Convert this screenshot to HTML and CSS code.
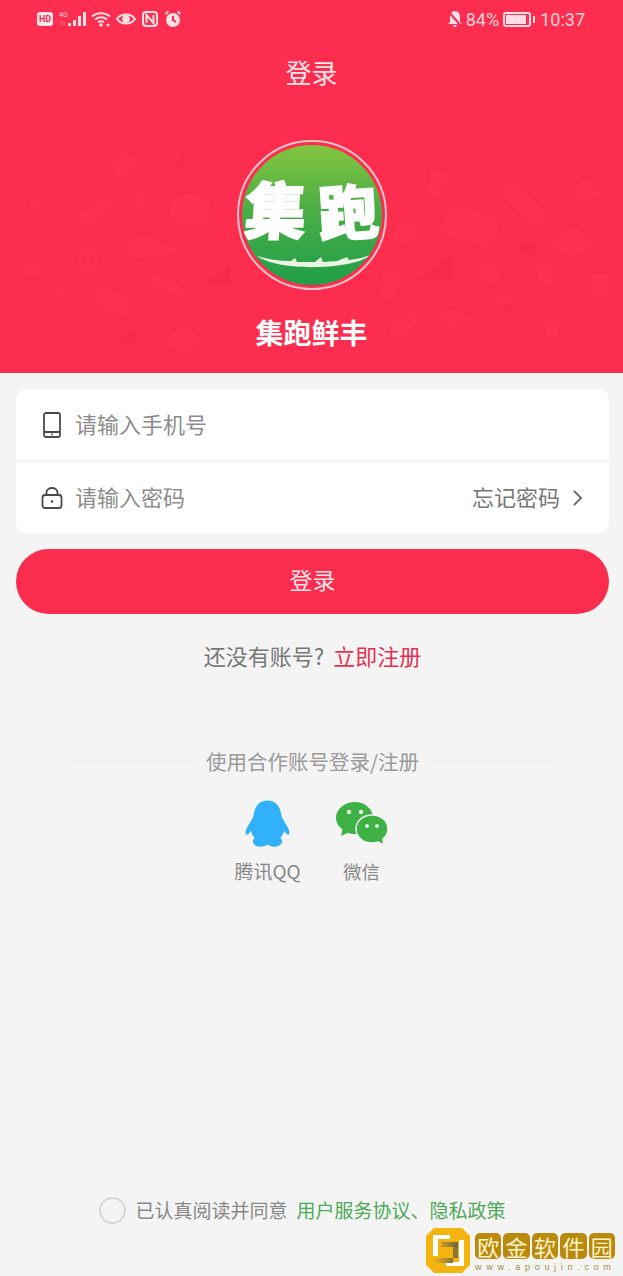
FILE: index.html
```html
<!DOCTYPE html>
<html lang="zh-CN">
<head>
<meta charset="utf-8">
<title>集跑鲜丰</title>
<link rel="stylesheet" href="styles.css">
</head>
<body>
<div class="page">
  <header class="hero">
    <svg class="doodles" viewBox="0 0 623 373" aria-hidden="true">
      <defs>
        <g id="leg"><path d="M-22 -2C-22 -14 -6 -16 6 -9C12 -5 15 -2 19 -1L27 -3L28 4L21 5C13 12 -22 16 -22 -2Z"/></g>
        <g id="small"><circle cx="0" cy="-8" r="7"/><path d="M-2 -2L-4 14M2 -2L0 14"/></g>
        <g id="burger"><rect x="-24" y="-14" width="48" height="28" rx="7"/><path d="M-24 -5H24M-24 3H24"/></g>
        <g id="hotdog"><rect x="-24" y="-9" width="48" height="18" rx="9"/><path d="M-20 0H20"/></g>
        <g id="tri"><path d="M-13 8L11 -8L11 8Z" class="fillme"/></g>
        <g id="cup"><path d="M-11 -12H11L7 13H-7ZM-13 -12H13"/></g>
        <g id="cake"><path d="M-18 -2L2 -14L18 4L0 16L-18 8Z"/><path d="M-12 -12L-8 -6M-4 -17L-2 -9M4 -16L4 -9"/></g>
        <g id="cone"><circle cx="-16" cy="-3" r="9"/><circle cx="-5" cy="0" r="8"/><path d="M0 -7L24 10L-3 9"/></g>
        <g id="cat"><path d="M-20 -12L-11 -18C-4 -21 6 -21 12 -17L20 -14C23 -4 20 14 0 15C-16 15 -24 2 -20 -12Z"/></g>
        <g id="pizza"><path d="M-24 -12L22 6L-8 22Z"/><path d="M-16 -6L-6 14M-4 -4L3 10"/></g>
        <g id="donut"><circle r="12"/><circle r="5" class="fillme"/></g>
      </defs>
      <g class="doodle-set">
        <use href="#small" transform="translate(33 212) rotate(15)"/>
        <use href="#hotdog" transform="translate(93 213) rotate(-35) scale(.85)"/>
        <use href="#hotdog" transform="translate(140 200) rotate(-50) scale(.6)"/>
        <use href="#cat" transform="translate(190 213)"/>
        <use href="#leg" transform="translate(150 248) scale(1.1)"/>
        <use href="#cake" transform="translate(34 268) scale(.7)"/>
        <use href="#donut" transform="translate(88 260)"/>
        <use href="#small" transform="translate(63 300) rotate(-5)"/>
        <use href="#burger" transform="translate(113 302) rotate(25) scale(.8)"/>
        <use href="#cone" transform="translate(175 287) rotate(8)"/>
        <use href="#tri" transform="translate(218 276)"/>
        <use href="#cake" transform="translate(185 338) scale(1.05)"/>
        <use href="#tri" transform="translate(128 337) scale(.7)"/>
        <use href="#donut" transform="translate(75 178) scale(.7)"/>
        <use href="#small" transform="translate(180 160) rotate(-35)"/>
        <use href="#cup" transform="translate(125 165) rotate(30)"/>
        <use href="#cup" transform="translate(437 183) rotate(20) scale(1.1)"/>
        <use href="#hotdog" transform="translate(523 203) rotate(42) scale(1.2)"/>
        <use href="#cake" transform="translate(585 190) scale(.9)"/>
        <use href="#cat" transform="translate(405 235) scale(.65)"/>
        <use href="#burger" transform="translate(470 226) rotate(17) scale(1.2)"/>
        <use href="#tri" transform="translate(528 245) rotate(40) scale(.8)"/>
        <use href="#cake" transform="translate(573 240) scale(1.15)"/>
        <use href="#tri" transform="translate(437 268) scale(1.3)"/>
        <use href="#cup" transform="translate(490 272) rotate(-35)"/>
        <use href="#cup" transform="translate(545 275) scale(.9)"/>
        <use href="#cup" transform="translate(600 285) scale(1)"/>
        <use href="#cup" transform="translate(390 285) rotate(15) scale(1.2)"/>
        <use href="#pizza" transform="translate(455 312)"/>
        <use href="#small" transform="translate(508 306) rotate(-20)"/>
        <use href="#hotdog" transform="translate(405 325) rotate(-40) scale(.8)"/>
        <use href="#cup" transform="translate(552 325) scale(.9)"/>
      </g>
    </svg>

    <div class="status">
      <div class="status-left">
        <span class="hd">HD</span>
        <span class="net"><i>4G</i><i>4G</i></span>
        <svg class="i-signal" viewBox="0 0 18 14"><path d="M0 11h3v3H0zM5 8h3v6H5zM10 4h3v10h-3zM15 0h3v14h-3z"/></svg>
        <svg class="i-wifi" viewBox="0 0 20 16"><path class="st" d="M1 5.500C6 1 14 1 19 5.500M4 8.500C7.500 5.500 12.500 5.500 16 8.500M7 11.300C8.800 10 11.200 10 13 11.300"/><circle cx="10" cy="14" r="1.700"/><circle cx="17" cy="14" r="1.500"/></svg>
        <svg class="i-eye" viewBox="0 0 20 14"><path class="st" d="M1 7C5 1 15 1 19 7C15 13 5 13 1 7Z"/><circle class="pupil" cx="10" cy="7" r="3.800"/></svg>
        <svg class="i-nfc" viewBox="0 0 16 16"><rect class="st" x="1" y="1" width="14" height="14" rx="3"/><path class="st" d="M4.500 12V4L11.500 12V4"/></svg>
        <svg class="i-alarm" viewBox="0 0 18 18"><circle cx="9" cy="10" r="7"/><path class="cut" d="M9 6V10L12 12"/><path class="st" d="M1.500 4L4.500 1.500M16.500 4L13.500 1.500"/></svg>
      </div>
      <div class="status-right">
        <svg class="i-bell" viewBox="0 0 16 18"><path d="M8 1C11.500 1 13 4 13 7V12L15 14H1L3 12V7C3 4 4.500 1 8 1ZM6 15H10C10 17.500 6 17.500 6 15Z"/><path class="cut" d="M1.500 1.500L14.500 16.500"/></svg>
        <span>84%</span>
        <span class="battery"><b></b></span>
        <span class="clock">10:37</span>
      </div>
    </div>

    <h1 class="title">登录</h1>

    <div class="logo">
      <div class="logo-disc">
        <span class="logo-a">集</span><span class="logo-b">跑</span>
        <svg class="crescent" viewBox="0 0 114 13"><path d="M0 1C10 4 22 6 34 6L38 3L40 7L58 7L64 2L66 7L80 6L90 2L92 5L104 3L114 0C96 15 22 17 0 1Z"/></svg>
      </div>
    </div>
    <div class="brand">集跑鲜丰</div>
  </header>

  <main class="main">
    <form class="card">
      <div class="row">
        <svg class="row-icon" viewBox="0 0 22 26"><rect x="3" y="1" width="16" height="24" rx="2"/><path d="M3 20H19"/><circle class="dot" cx="11" cy="22.500" r=".9"/></svg>
        <span class="ph">请输入手机号</span>
      </div>
      <div class="row">
        <svg class="row-icon" viewBox="0 0 22 26"><rect x="1.500" y="10" width="19" height="13" rx="2.500"/><path d="M5.500 10V7.500C5.500 1.500 16.500 1.500 16.500 7.500V10"/><circle class="dot" cx="11" cy="16.500" r="1.300"/></svg>
        <span class="ph">请输入密码</span>
        <span class="forgot">忘记密码</span>
        <svg class="chev" viewBox="0 0 12 20"><path d="M2 2L10 10L2 18"/></svg>
      </div>
    </form>

    <div class="btn">登录</div>

    <p class="signup">还没有账号?<span class="signup-link">立即注册</span></p>

    <div class="partner">
      <span class="partner-line"></span>
      <span>使用合作账号登录/注册</span>
      <span class="partner-line"></span>
    </div>

    <div class="social">
      <div class="social-item">
        <svg class="qq" viewBox="0 0 46 48"><path d="M23 0C31 0 36 6 37 14C38 19 40 21 43 26C46 31 46 35 44 35C43 35 41 33 40 31C39 34 38 37 36 38C39 40 39 46 32 47C28 48 25 46 23 45C21 46 18 48 14 47C7 46 7 40 10 38C8 37 7 34 6 31C5 33 3 35 2 35C0 35 0 31 3 26C6 21 8 19 9 14C10 6 15 0 23 0Z"/></svg>
        <span>腾讯QQ</span>
      </div>
      <div class="social-item">
        <svg class="wx" viewBox="0 0 52 44">
          <path class="wx-b" d="M19 0C29 0 37 7 37 16C37 25 29 32 19 32C16.500 32 14 31.500 12 30.700L5 34L6.500 27.500C2.500 24.500 0 20.500 0 16C0 7 8.500 0 19 0Z"/>
          <path class="wx-s" d="M36 13C45 13 52 19 52 27C52 31.500 50 34.500 47 37L48 43L42 40C40 40.700 38 41 36 41C27 41 20 35 20 27C20 19 27 13 36 13Z"/>
          <circle class="wx-e" cx="13" cy="10" r="2.200"/><circle class="wx-e" cx="25" cy="10" r="2.200"/>
          <circle class="wx-e" cx="31" cy="24" r="1.900"/><circle class="wx-e" cx="41" cy="24" r="1.900"/>
        </svg>
        <span>微信</span>
      </div>
    </div>

    <div class="agree">
      <span class="radio"></span>
      <span>已认真阅读并同意</span>
      <span class="agree-link">用户服务协议、隐私政策</span>
    </div>
  </main>

  <aside class="mark">
    <svg class="mark-logo" viewBox="0 0 44 45">
      <defs>
        <linearGradient id="mg" x1="0" y1="0" x2="1" y2="0"><stop offset="0" stop-color="#f0b31a"/><stop offset="1" stop-color="#6f6240"/></linearGradient>
      </defs>
      <path class="mark-o" d="M8 0H36L44 8V37L36 45H8L0 37V8Z"/>
      <path class="mark-w" d="M7 7H24V11H12V28H7ZM20 34H33V12H38V38H20Z"/>
      <path fill="url(#mg)" d="M15 14H32V19H15ZM8 30H27V35H8Z"/>
      <path fill="#8a7436" d="M27 19H32V30H27Z"/>
      <path class="mark-o" d="M14 19H20V28H14Z"/>
    </svg>
    <div class="mark-text">
      <div class="mark-cn"><span>欧</span><span>金</span><span>软</span><span>件</span><span>园</span></div>
      <div class="mark-en">www.apoujin.com</div>
    </div>
  </aside>
</div>
</body>
</html>
```

FILE: styles.css
```css
* { box-sizing: border-box; }
html, body { margin: 0; padding: 0; }
body {
  background: #f4f4f4;
  font-family: "Noto Sans CJK SC", "Noto Sans", sans-serif;
  color: #888;
}
.page {
  position: relative;
  width: 623px;
  height: 1276px;
  overflow: hidden;
  display: flex;
  flex-direction: column;
}

/* header */
.hero {
  position: relative;
  height: 373px;
  flex: none;
  background: #fd2d4f;
  display: flex;
  flex-direction: column;
  align-items: center;
}
.doodles {
  position: absolute;
  inset: 0;
  width: 100%;
  height: 100%;
  filter: blur(.6px);
}
.doodle-set use { fill: rgba(255, 120, 140, .05); stroke: rgba(205, 25, 60, .09); stroke-width: 1.500; }
.fillme { fill: rgba(205, 25, 60, .08); }

.status {
  position: relative;
  width: 100%;
  height: 38px;
  padding: 0 38px 0 37px;
  display: flex;
  justify-content: space-between;
  align-items: center;
  color: rgba(255, 255, 255, .8);
  font-family: Roboto, "Liberation Sans", sans-serif;
  font-size: 18px;
}
.status svg { fill: rgba(255, 255, 255, .85); flex: none; }
.status .st { fill: none; stroke: rgba(255, 255, 255, .85); stroke-width: 2; }
.status .cut { fill: none; stroke: #fd2d4f; stroke-width: 2; }
.status .pupil { fill: rgba(255, 255, 255, .85); }
.status-left, .status-right { display: flex; align-items: center; }
.status-left { gap: 5px; }
.hd {
  width: 16px;
  height: 14px;
  border-radius: 3px;
  background: rgba(255, 255, 255, .88);
  color: #fd2d4f;
  font-size: 9px;
  font-weight: 700;
  line-height: 14px;
  text-align: center;
}
.net {
  display: flex;
  flex-direction: column;
  width: 11px;
  margin-left: 1px;
  margin-right: -7px;
  font-size: 7px;
  line-height: 8px;
}
.net i { font-style: normal; }
.net i + i { opacity: .4; font-size: 5px; }
.i-signal { width: 18px; height: 14px; }
.i-wifi { width: 20px; height: 16px; }
.i-eye { width: 20px; height: 14px; }
.i-nfc { width: 16px; height: 16px; margin-left: 1px; }
.i-alarm { width: 18px; height: 18px; margin-left: 1px; }
.i-bell { width: 16px; height: 18px; margin-right: 3px; }
.battery {
  position: relative;
  width: 28px;
  height: 15px;
  margin: 0 10px 0 4px;
  padding: 1px;
  border: 2px solid rgba(255, 255, 255, .85);
  border-radius: 3px;
}
.battery b { display: block; height: 100%; width: 92%; background: rgba(255, 255, 255, .85); }
.battery::after {
  content: "";
  position: absolute;
  right: -6px;
  top: 2px;
  width: 2px;
  height: 7px;
  background: rgba(255, 255, 255, .85);
}
.clock { margin-left: -1px; }

.title {
  position: relative;
  margin: 14px 0 0;
  font-size: 26px;
  font-weight: 400;
  line-height: 40px;
  color: rgba(255, 255, 255, .9);
}
.logo {
  position: relative;
  margin-top: 48px;
  width: 150px;
  height: 150px;
  padding: 3px;
  border: 2px solid #f9c3cd;
  border-radius: 50%;
}
.logo-disc {
  position: relative;
  height: 100%;
  border-radius: 50%;
  background: linear-gradient(#84c53f 0%, #4cae45 45%, #1f9e48 100%);
  color: #fff;
  font-weight: 900;
  overflow: hidden;
}
.logo-a, .logo-b {
  position: absolute;
  line-height: 1;
  -webkit-text-stroke: 1.500px #fff;
}
.logo-a { left: 3px; top: 31px; font-size: 62px; transform: skewX(-4deg); }
.logo-b { left: 76px; top: 34px; font-size: 60px; transform: rotate(-4deg); }
.crescent {
  position: absolute;
  left: 15px;
  bottom: 17px;
  width: 114px;
  height: 13px;
  fill: #e9f4e2;
}
.brand {
  position: relative;
  margin-top: 22px;
  font-size: 28px;
  font-weight: 700;
  line-height: 40px;
  color: #fff;
  letter-spacing: 0;
}

/* main */
.main {
  flex: 1;
  padding: 16px 14px 0 16px;
  display: flex;
  flex-direction: column;
  align-items: center;
}
.card {
  width: 593px;
  height: 144px;
  background: #fff;
  border-radius: 11px;
  overflow: hidden;
}
.row {
  height: 71px;
  padding: 0 26px 0 25px;
  display: flex;
  align-items: center;
  font-size: 22px;
  color: #888;
}
.row + .row { height: 73px; border-top: 2px solid #f3f3f3; }
.row-icon {
  width: 22px;
  height: 26px;
  margin-right: 12px;
  fill: none;
  stroke: #4b4b4b;
  stroke-width: 1.800;
}
.row-icon .dot { fill: #4b4b4b; stroke: none; }
.ph { color: #8c8c8c; margin-bottom: 4px; }
.forgot { margin-left: auto; margin-bottom: 4px; color: #777; }
.chev {
  width: 11px;
  height: 18px;
  margin-left: 12px;
  fill: none;
  stroke: #666;
  stroke-width: 2;
}
.btn {
  width: 593px;
  height: 65px;
  margin-top: 16px;
  border-radius: 33px;
  background: #fb2d4f;
  color: rgba(255, 255, 255, .88);
  font-size: 23px;
  line-height: 61px;
  text-align: center;
}
.signup {
  margin: 23px 0 0;
  font-size: 22px;
  line-height: 36px;
  color: #777;
}
.signup-link { margin-left: 9px; color: #e5304f; }
.partner {
  width: 490px;
  margin-top: 72px;
  display: flex;
  align-items: center;
  gap: 14px;
  font-size: 20.500px;
  line-height: 32px;
  color: #9a9a9a;
  white-space: nowrap;
}
.partner-line { flex: 1; height: 1px; background: #ececec; }
.social {
  margin-top: 23px;
  margin-left: -3px;
  display: flex;
  gap: 35px;
}
.social-item {
  display: flex;
  flex-direction: column;
  align-items: center;
  font-size: 18.500px;
  line-height: 28px;
  color: #888;
}
.social-item:first-child { font-size: 19px; }
.qq { width: 45px; height: 48px; fill: #32b1fb; margin-bottom: 9px; }
.wx { width: 52px; height: 44px; margin-top: 2px; margin-bottom: 11px; }
.wx-b { fill: #3db144; }
.wx-s { fill: #3db144; stroke: #f4f4f4; stroke-width: 1.500; }
.wx-e { fill: #eaf7ea; }
.agree {
  margin-top: auto;
  margin-bottom: 52px;
  margin-left: -20px;
  align-self: center;
  display: flex;
  align-items: center;
  font-size: 19px;
  line-height: 28px;
  color: #888;
  white-space: nowrap;
}
.radio {
  width: 27px;
  height: 27px;
  margin-right: 9px;
  border: 2px solid #d6d6d6;
  border-radius: 50%;
}
.agree-link { margin-left: 9px; color: #4ca958; }

/* watermark over the corner */
.mark {
  position: absolute;
  right: 8px;
  bottom: 3px;
  display: flex;
  gap: 5px;
  align-items: flex-start;
}
.mark-logo { width: 44px; height: 45px; }
.mark-o { fill: #f3b40f; }
.mark-w { fill: #fff; }
.mark-text { width: 140px; padding-top: 5px; }
.mark-cn { display: flex; gap: 2px; }
.mark-cn span {
  flex: 1;
  height: 26px;
  border-radius: 5px;
  background: #b98a0d;
  color: #fff3c9;
  font-size: 22px;
  line-height: 26px;
  text-align: center;
}
.mark-en {
  margin-top: 3px;
  font-family: "Liberation Sans", sans-serif;
  font-size: 9px;
  line-height: 11px;
  letter-spacing: 4.700px;
  color: #a88a3a;
  white-space: nowrap;
}
```
